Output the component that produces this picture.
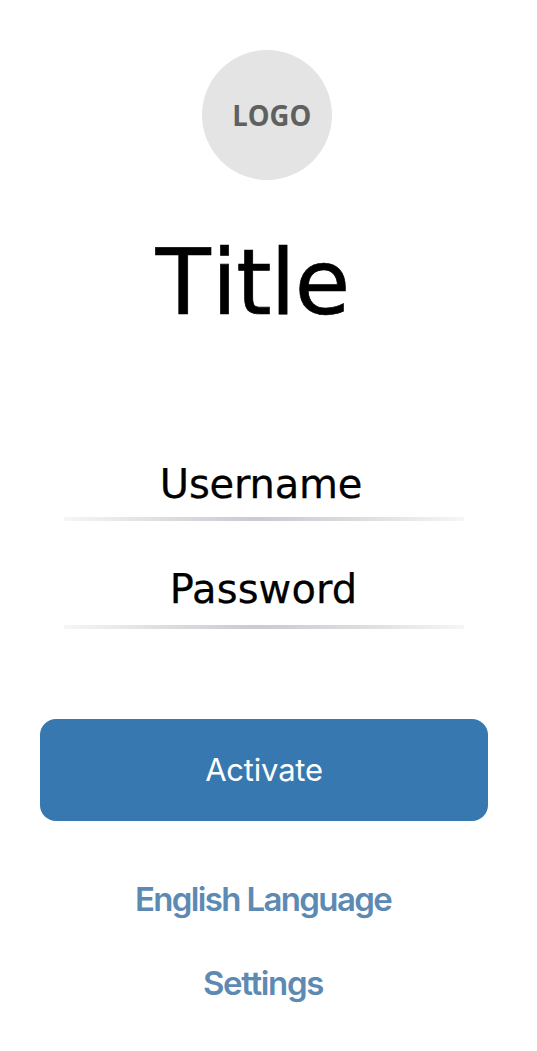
<main>
  <div class="logo"><span>LOGO</span></div>
  <h1><span>T</span>itle</h1>
  <div class="field user"><span>Username</span></div>
  <div class="field pass"><span>Password</span></div>
  <button>Activate</button>
  <a class="lang" href="#language">English Language</a>
  <a class="settings" href="#settings">Settings</a>
</main>

<style>
  :global(body) { margin: 0; background: #fff; }
  main { height: 1051px; padding: 50px 49px 0 40px; box-sizing: border-box; display: flex; flex-direction: column; align-items: center; overflow: hidden; }
  .logo { width: 130px; height: 130px; border-radius: 50%; background: #e4e4e4; color: #606060; display: flex; align-items: center; justify-content: center; font: 700 29px/40px "Open Sans", sans-serif; margin-left: 6px; flex: none; }
  .logo span { margin: 0 0 1px 9px; transform: scaleX(.945); }
  h1 { margin: 53px 23px 0 0; height: 100px; font: 400 90px/100px "DejaVu Sans", sans-serif; letter-spacing: -.9px; -webkit-text-stroke: .7px #000; color: #000; flex: none; }
  h1 span { letter-spacing: 1.3px; }
  .field { width: 400px; box-sizing: border-box; font: 400 40px/60px "DejaVu Sans", sans-serif; text-align: center; color: #000; border-bottom: 4px solid; border-image: linear-gradient(90deg, #f6f6f7, #dedee0 25%, #c9cad3 48%, #dedee0 75%, #f6f6f7) 1; flex: none; -webkit-text-stroke: .25px #000; }
  .user { margin-top: 121px; height: 67px; padding-right: 6px; letter-spacing: -.2px; }
  .pass { margin-top: 38px; height: 70px; padding-right: 1px; letter-spacing: .1px; }
  button { margin-top: 90px; padding: 0 0 2px; width: 448px; height: 102px; border: 0; border-radius: 16px; background: #3778b1; color: #fff; font: 400 31px Inter, sans-serif; letter-spacing: -.2px; flex: none; }
  a { margin-right: 2px; font: 600 33px/42px Inter, sans-serif; color: #5d8ab3; text-decoration: none; }
  .lang { margin-top: 57px; letter-spacing: -1.65px; }
  .settings { margin-top: 42px; letter-spacing: -1.36px; }
</style>
